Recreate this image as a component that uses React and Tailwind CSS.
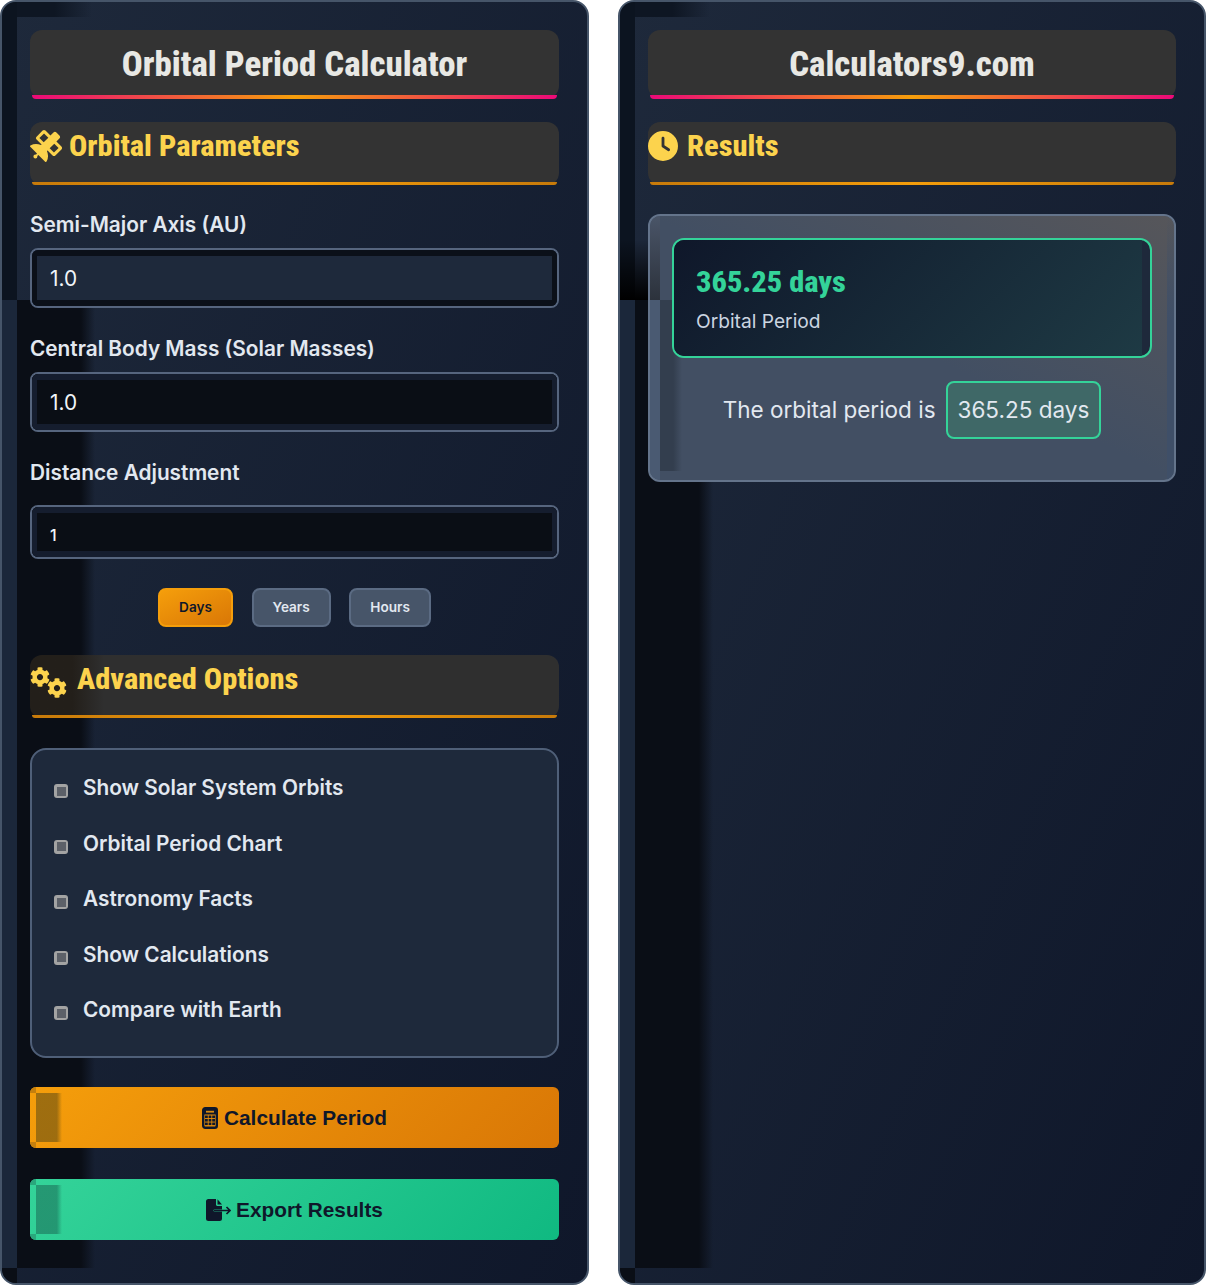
import { FaSatellite, FaCog } from "react-icons/fa";
import { FaClock } from "react-icons/fa6";

const condensed = "font-['Roboto_Condensed',Roboto,sans-serif] [font-stretch:75%]";

export default function App() {
  return (
    <div className="w-[1206px] h-[1285px] grid grid-cols-[589px_588px] gap-x-[29px] font-['Inter',sans-serif] bg-white">
      <Panel>
        <TitleBar>Orbital Period Calculator</TitleBar>
        <SectionHeader icon={<FaSatellite className="w-[32px] h-[32px]" />} gap="ml-[7px]" className="mt-[24px]">
          Orbital Parameters
        </SectionHeader>

        <Label className="mt-[27px]">Semi-Major Axis (AU)</Label>
        <Input value="1.0" tone="bg-[#1e293b] border-[#0b1019]" className="mt-[11px] h-[60px]" />
        <Label className="mt-[28px]">Central Body Mass (Solar Masses)</Label>
        <Input value="1.0" tone="bg-[#0a0e15] border-[#151d2e]" className="mt-[11px] h-[60px]" />
        <Label className="mt-[28px]">Distance Adjustment</Label>
        <Input value="1" tone="bg-[#0a0e15] border-[#151d2e]" small className="mt-[20px] h-[54px]" />

        <div className="mt-[29px] flex justify-center gap-[18.6px]">
          <UnitButton active>Days</UnitButton>
          <UnitButton>Years</UnitButton>
          <UnitButton>Hours</UnitButton>
        </div>

        <SectionHeader
          icon={
            <span className="relative top-[3px] block w-[37px] h-[31px]">
              <FaCog className="absolute left-0 top-0 w-[20px] h-[20px]" />
              <FaCog className="absolute right-0 bottom-0 w-[20px] h-[20px]" />
            </span>
          }
          gap="ml-[10px]"
          className="mt-[28px]"
          bar="bg-gradient-to-r from-[#231f1a] from-[8%] to-[#2f2f2f] to-[14%]"
        >
          Advanced Options
        </SectionHeader>

        <div className="mt-[30px] h-[310px] rounded-2xl border-2 border-[#4f5f78] bg-[#1e293b] pl-[22px] pt-[25px] flex flex-col gap-[29.5px]">
          <Check>Show Solar System Orbits</Check>
          <Check>Orbital Period Chart</Check>
          <Check>Astronomy Facts</Check>
          <Check>Show Calculations</Check>
          <Check>Compare with Earth</Check>
        </div>

        <ActionButton
          className="mt-[29px] bg-[linear-gradient(135deg,#f59e0b,#d97706)]"
          patch="from-[#7a5a12]/70"
          corner="bg-[#c47f0e]"
          icon={<CalculatorIcon />}
        >
          Calculate Period
        </ActionButton>
        <ActionButton
          className="mt-[31px] bg-[linear-gradient(135deg,#34d399,#10b981)]"
          patch="from-[#1f7f63]/70"
          corner="bg-[#2aa67c]"
          icon={<ExportIcon />}
        >
          Export Results
        </ActionButton>
      </Panel>

      <Panel
        extra={<div className="absolute left-0 top-[238px] w-[40px] h-[60px] bg-gradient-to-b from-transparent to-black" />}
      >
        <TitleBar>Calculators9.com</TitleBar>
        <SectionHeader icon={<FaClock className="w-[30px] h-[30px]" />} gap="ml-[9px]" className="mt-[24px]">
          Results
        </SectionHeader>

        <div className="relative mt-[29px] h-[268px] rounded-xl border-2 border-[#64748b] bg-[#424f63] overflow-hidden">
          <div className="absolute inset-0 bg-gradient-to-bl from-[#56565a] to-transparent to-50%" />
          <div className="absolute left-0 top-0 w-[10px] h-[84px] bg-gradient-to-b from-[#4a5568] to-[#2c323c]" />
          <div className="absolute left-0 top-[84px] w-[10px] bottom-0 bg-[#4a5a72]" />
          <div className="absolute left-[10px] top-[84px] bottom-[9px] w-[22px] bg-gradient-to-r from-[#333e4e] from-[60%] to-transparent" />
          <div className="absolute right-0 top-0 w-[7px] h-full bg-gradient-to-b from-transparent to-[#3f4f68] to-40%" />
          <div className="relative mx-[22px] mt-[22px] h-[120px] rounded-xl border-2 border-[#34d399] bg-[#1e293b] overflow-hidden pl-[22px] pt-[22px]">
            <div className="absolute left-0 top-0 bottom-0 right-[8px] bg-[linear-gradient(135deg,#0f172a,#1e3a44)]" />
            <div className={`relative text-[#34d399] text-[30.4px] leading-[40px] font-extrabold ${condensed}`}>365.25 days</div>
            <div className="relative mt-[7px] text-[#cbd5e1] text-[19.2px] leading-[24px]">Orbital Period</div>
          </div>
          <div className="relative mt-[23px] flex justify-center items-center text-[#e2e8f0] text-[22.5px]">
            <span>The orbital period is</span>
            <span className="ml-[10px] h-[58px] px-[10px] flex items-center rounded-lg border-2 border-[#34d399] bg-[#3f6867]">365.25 days</span>
          </div>
        </div>
      </Panel>
    </div>
  );
}

function Panel({ extra, children }) {
  return (
    <div className="relative h-[1285px] rounded-2xl border-2 border-[#465569] bg-gradient-to-br from-[#1e293b] to-[#0f172a] overflow-hidden">
      {/* odd shadow tiles along the left edge */}
      <div className="absolute left-0 top-0 w-[15px] h-[298px] bg-[#0c1420]" />
      <div className="absolute left-[15px] top-0 w-[75px] h-[15px] bg-gradient-to-r from-[#0e1623] from-50% to-transparent" />
      <div className="absolute left-0 top-[298px] w-[15px] h-[968px] bg-[#1b273a]" />
      <div className="absolute left-[15px] top-[298px] w-[78px] h-[968px] bg-gradient-to-r from-[#0a0e16] from-[82%] to-transparent" />
      <div className="absolute left-0 top-[1266px] w-[15px] h-[15px] bg-[#0a0e16]" />
      {extra}
      <div className="relative px-[28px] pt-[28px] flex flex-col">{children}</div>
    </div>
  );
}

function TitleBar({ children }) {
  return (
    <div className="relative h-[68px] rounded-xl bg-[#333333] flex items-start justify-center">
      <h1 className={`mt-[13px] text-[#e8e8e4] text-[34.8px] leading-[42px] font-extrabold ${condensed}`}>{children}</h1>
      <div className="absolute left-[2px] right-[2px] -bottom-[1px] h-[4px] rounded-b-xl bg-[linear-gradient(90deg,#ec0a78,#f59e0b,#ec0a78)]" />
    </div>
  );
}

function SectionHeader({ icon, gap, className, bar = "bg-[#333333]", children }) {
  return (
    <div className={`relative h-[63px] rounded-xl flex items-start text-[#fcd34d] ${bar} ${className}`}>
      <div className="mt-[8px] flex items-center">
        {icon}
        <h2 className={`${gap} text-[30.4px] leading-[32px] font-extrabold ${condensed}`}>{children}</h2>
      </div>
      <div className="absolute left-[2px] right-[2px] bottom-0 h-[3px] rounded-b-xl bg-[linear-gradient(90deg,#c77a0a,#f59e0b,#c77a0a)]" />
    </div>
  );
}

function Label({ className, children }) {
  return <label className={`block text-[#e2e8f0] text-[20.8px] leading-[25px] font-semibold ${className}`}>{children}</label>;
}

function Input({ value, tone, small, className }) {
  return (
    <div className={`rounded-lg border-2 border-[#56657e] overflow-hidden ${className}`}>
      <div className={`h-full flex items-center pl-[13px] border-solid border-t-[6px] border-b-[6px] border-l-[5px] border-r-[5px] text-[#f1f5f9] ${tone} ${small ? "text-[16px] font-medium" : "text-[20.8px]"}`}>
        <span className={small ? "mt-[5px]" : "mt-[2px]"}>{value}</span>
      </div>
    </div>
  );
}

function UnitButton({ active, children }) {
  return (
    <button
      className={`h-[39px] px-[19px] rounded-lg border-2 text-[13.6px] font-semibold ${
        active
          ? "border-[#f59e0b] bg-gradient-to-br from-[#f59e0b] to-[#d97706] text-[#0f172a]"
          : "border-[#5b6b83] bg-[#475569] text-[#e2e8f0]"
      }`}
    >
      {children}
    </button>
  );
}

function Check({ children }) {
  return (
    <div className="flex items-center h-[26px] text-[#e2e8f0] text-[20.8px] font-semibold">
      <span className="mt-[6px] w-[14px] h-[14px] rounded-[3px] bg-[#a3a3a3] flex items-center justify-center shrink-0">
        <span className="w-[9px] h-[9px] bg-[#5c6068]" />
      </span>
      <span className="ml-[15px]">{children}</span>
    </div>
  );
}

function ActionButton({ className, patch, corner, icon, children }) {
  return (
    <button className={`relative h-[61px] rounded-md text-[#0f172a] flex items-center justify-center overflow-hidden ${className}`}>
      <span className={`absolute left-[6px] top-[6px] bottom-[6px] w-[26px] bg-gradient-to-r from-[80%] to-transparent ${patch}`} />
      <span className={`absolute left-0 top-0 w-[6px] h-[6px] ${corner}`} />
      <span className={`absolute left-0 bottom-0 w-[6px] h-[6px] ${corner}`} />
      {icon}
      <span className="mt-[1px] font-['Liberation_Sans',sans-serif] font-bold text-[20.8px]">{children}</span>
    </button>
  );
}

function CalculatorIcon() {
  return (
    <svg width="16" height="22" viewBox="0 0 16 22" className="mr-[6px]" fill="none">
      <rect x="1.2" y="1.2" width="13.6" height="19.6" rx="2" stroke="#0f172a" strokeWidth="2.4" />
      <rect x="2" y="2" width="12" height="5.5" fill="#0f172a" />
      <rect x="4" y="3.8" width="8" height="1.8" fill="#d98a10" />
      <g fill="#0f172a">
        <rect x="3" y="8.5" width="2.8" height="2.6" />
        <rect x="6.6" y="8.5" width="2.8" height="2.6" />
        <rect x="10.2" y="8.5" width="2.8" height="2.6" />
        <rect x="3" y="12" width="2.8" height="2.6" />
        <rect x="6.6" y="12" width="2.8" height="2.6" />
        <rect x="10.2" y="12" width="2.8" height="2.6" />
        <rect x="3" y="15.5" width="2.8" height="2.6" />
        <rect x="6.6" y="15.5" width="2.8" height="2.6" />
        <rect x="10.2" y="15.5" width="2.8" height="2.6" />
      </g>
    </svg>
  );
}

function ExportIcon() {
  return (
    <svg width="25" height="22" viewBox="0 0 25 22" className="mr-[5px]" fill="none">
      <path
        d="M2.5 0H10v5.5c0 .8.7 1.5 1.5 1.5H16v3.5H8.5a1 1 0 0 0 0 2H16V19.5a2.5 2.5 0 0 1-2.5 2.5h-11A2.5 2.5 0 0 1 0 19.5v-17A2.5 2.5 0 0 1 2.5 0Z"
        fill="#0f172a"
      />
      <path d="M11.5 0.3 16 5.5H11.5Z" fill="#0f172a" />
      <path d="M8 11.5H24M20.5 8l3.5 3.5-3.5 3.5" stroke="#0f172a" strokeWidth="1.7" />
    </svg>
  );
}
